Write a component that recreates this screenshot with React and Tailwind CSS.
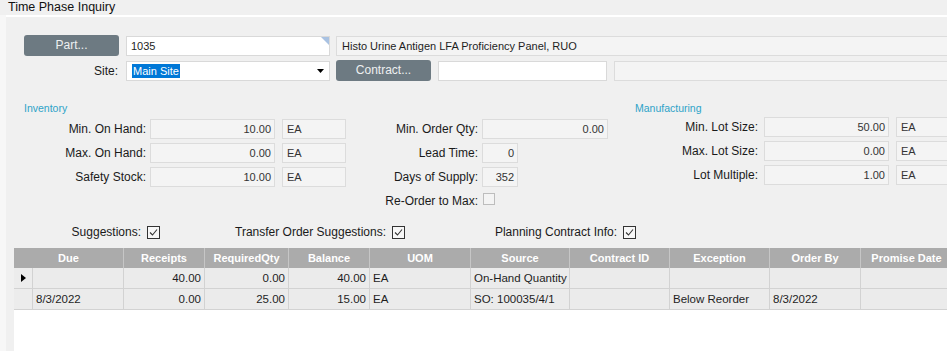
import React from 'react'

// Time Phase Inquiry screen

const labelCls = 'text-right text-[12px] leading-[20px] text-[#1a1a1a] whitespace-nowrap'
const fieldCls = 'h-[20px] bg-[#f4f4f4] border border-[#dcdcdc] text-[11px] leading-[18px] text-[#333] px-[4px] whitespace-nowrap overflow-hidden'

function Field({ w, value, right }) {
  return (
    <div className={`${fieldCls} ${w} ${right ? 'text-right pr-[3px]' : ''}`}>{value}</div>
  )
}

function Row({ labelW, label, gap, field, uom }) {
  return (
    <div className="flex items-center h-[20px]">
      <div className={`${labelW} ${labelCls}`}>{label}</div>
      <div className={gap} />
      {field}
      {uom && <div className="w-[7px]" />}
      {uom && <Field w="w-[64px] shrink-0" value={uom} />}
    </div>
  )
}

function CheckBox({ checked }) {
  return (
    <div className="w-[13px] h-[13px] border border-[#333] bg-[#f7f7f7] shrink-0">
      {checked && (
        <svg width="11" height="11" viewBox="0 0 11 11">
          <polyline points="2,5.5 4.5,8 9,2.5" fill="none" stroke="#333" strokeWidth="1.1" />
        </svg>
      )}
    </div>
  )
}

function SlateButton({ children }) {
  return (
    <div className="w-[95px] h-[21px] rounded-[3px] bg-[#6d7a82] text-[#eef0f1] text-[12px] leading-[21px] text-center">
      {children}
    </div>
  )
}

const cols = [
  { key: 'due', w: 'w-[91px]', head: 'Due' },
  { key: 'rec', w: 'w-[81px]', head: 'Receipts', right: true },
  { key: 'req', w: 'w-[84px]', head: 'RequiredQty', right: true },
  { key: 'bal', w: 'w-[81px]', head: 'Balance', right: true },
  { key: 'uom', w: 'w-[101px]', head: 'UOM' },
  { key: 'src', w: 'w-[99px]', head: 'Source' },
  { key: 'con', w: 'w-[100px]', head: 'Contract ID' },
  { key: 'exc', w: 'w-[100px]', head: 'Exception' },
  { key: 'ord', w: 'w-[91px]', head: 'Order By' },
  { key: 'pro', w: 'w-[92px]', head: 'Promise Date' },
]

const rows = [
  { due: '', rec: '40.00', req: '0.00', bal: '40.00', uom: 'EA', src: 'On-Hand Quantity', con: '', exc: '', ord: '', pro: '', current: true },
  { due: '8/3/2022', rec: '0.00', req: '25.00', bal: '15.00', uom: 'EA', src: 'SO: 100035/4/1', con: '', exc: 'Below Reorder', ord: '8/3/2022', pro: '' },
]

export default function App() {
  return (
    <div className="w-[947px] h-[351px] overflow-hidden bg-[#f0f0f0] font-['Liberation_Sans',Arial,sans-serif] text-[#1a1a1a]">
      <div className="h-[15px] pl-[8px] text-[12.5px] leading-[14px] text-[#111]">Time Phase Inquiry</div>
      <div className="flex h-[336px]">
        <div className="w-[6px] shrink-0 bg-[#f7f7f7]" />
        <div className="flex-1 min-w-0 border-t-2 border-white flex flex-col">
          {/* part row */}
          <div className="flex items-center mt-[18px] pl-[18px] h-[21px]">
            <SlateButton>Part...</SlateButton>
            <div className="relative ml-[7px] w-[204px] h-[20px] bg-white border border-[#d9d9d9] text-[11px] leading-[18px] px-[4px] text-[#1e1e1e]">
              1035
              <div className="absolute top-0 right-0 w-0 h-0 border-t-[8px] border-l-[8px] border-t-[#a9c2e2] border-l-transparent" />
            </div>
            <div className="ml-[6px] flex-1 h-[20px] bg-[#f4f4f4] border border-[#dcdcdc] border-r-0 text-[11px] leading-[18px] px-[5px] text-[#1e1e1e] whitespace-nowrap">
              Histo Urine Antigen LFA Proficiency Panel, RUO
            </div>
          </div>
          {/* site row */}
          <div className="flex items-center mt-[4px] pl-[18px] h-[21px]">
            <div className="w-[95px] text-right pr-[1px] text-[12px]">Site:</div>
            <div className="relative ml-[7px] w-[204px] h-[20px] bg-white border border-[#d9d9d9] px-[5px] flex items-center">
              <span className="bg-[#0078d7] text-white text-[11px] leading-[14px] px-[1px]">Main Site</span>
              <svg className="absolute right-[5px] top-[7px]" width="7" height="4" viewBox="0 0 7 4">
                <polygon points="0,0 7,0 3.5,4" fill="#000" />
              </svg>
            </div>
            <div className="ml-[6px]">
              <SlateButton>Contract...</SlateButton>
            </div>
            <div className="ml-[7px] w-[169px] h-[20px] bg-white border border-[#d9d9d9]" />
            <div className="ml-[7px] flex-1 h-[20px] bg-[#f4f4f4] border border-[#dcdcdc] border-r-0" />
          </div>

          {/* settings section */}
          <div className="flex mt-[20px] h-[123px] pl-[18px]">
            <div className="flex flex-col w-[322px] shrink-0">
              <div className="h-[18px] text-[10.5px] leading-[14px] text-[#2ea3c8]">Inventory</div>
              <div className="flex flex-col gap-[4px]">
                <Row labelW="w-[122px]" label="Min. On Hand:" gap="w-[4px]" field={<Field w="w-[125px]" value="10.00" right />} uom="EA" />
                <Row labelW="w-[122px]" label="Max. On Hand:" gap="w-[4px]" field={<Field w="w-[125px]" value="0.00" right />} uom="EA" />
                <Row labelW="w-[122px]" label="Safety Stock:" gap="w-[4px]" field={<Field w="w-[125px]" value="10.00" right />} uom="EA" />
              </div>
            </div>
            <div className="flex flex-col w-[262px] shrink-0 pt-[18px] gap-[4px]">
              <Row labelW="w-[132px]" label="Min. Order Qty:" gap="w-[4px]" field={<Field w="w-[126px]" value="0.00" right />} />
              <Row labelW="w-[132px]" label="Lead Time:" gap="w-[4px]" field={<Field w="w-[36px]" value="0" right />} />
              <Row labelW="w-[132px]" label="Days of Supply:" gap="w-[4px]" field={<Field w="w-[36px]" value="352" right />} />
              <div className="flex items-start h-[20px]">
                <div className={`w-[132px] ${labelCls}`}>Re-Order to Max:</div>
                <div className="ml-[5px] mt-[2px] w-[12px] h-[12px] border border-[#bdbdbd] bg-[#f4f4f4]" />
              </div>
            </div>
            <div className="flex flex-col ml-[27px] w-[340px] shrink-0">
              <div className="h-[16px] text-[10.5px] leading-[14px] text-[#2ea3c8]">Manufacturing</div>
              <div className="flex flex-col gap-[4px]">
                <Row labelW="w-[123px]" label="Min. Lot Size:" gap="w-[6px]" field={<Field w="w-[125px]" value="50.00" right />} uom="EA" />
                <Row labelW="w-[123px]" label="Max. Lot Size:" gap="w-[6px]" field={<Field w="w-[125px]" value="0.00" right />} uom="EA" />
                <Row labelW="w-[123px]" label="Lot Multiple:" gap="w-[6px]" field={<Field w="w-[125px]" value="1.00" right />} uom="EA" />
              </div>
            </div>
          </div>

          {/* checkbox row */}
          <div className="flex items-center h-[16px] text-[12px]">
            <div className="w-[135px] text-right">Suggestions:</div>
            <div className="ml-[6px]"><CheckBox checked /></div>
            <div className="w-[226px] text-right">Transfer Order Suggestions:</div>
            <div className="ml-[6px]"><CheckBox checked /></div>
            <div className="w-[212px] text-right">Planning Contract Info:</div>
            <div className="ml-[6px]"><CheckBox checked /></div>
          </div>

          {/* grid */}
          <div className="mt-[8px] ml-[8px] flex-1 bg-white min-w-0">
            <div className="flex h-[20px] bg-[#ababab] text-white font-bold text-[11px] leading-[20px] whitespace-nowrap">
              {cols.map((c, i) => (
                <div
                  key={c.key}
                  className={`shrink-0 text-center ${i === 0 ? 'w-[109px]' : `${c.w} border-l border-[#c6c6c6]`}`}
                >
                  {c.head}
                </div>
              ))}
            </div>
            {rows.map((r, ri) => (
              <div key={ri} className="flex h-[21px] border-b border-[#d2d2d2] bg-[#ebebeb] text-[11.5px] leading-[20px] text-[#1e1e1e] whitespace-nowrap">
                <div className="w-[18px] shrink-0 bg-[#ececec] flex items-center justify-center">
                  {r.current && (
                    <svg width="5" height="8" viewBox="0 0 5 8">
                      <polygon points="0,0 5,4 0,8" fill="#000" />
                    </svg>
                  )}
                </div>
                {cols.map((c) => (
                  <div
                    key={c.key}
                    className={`${c.w} shrink-0 border-l border-[#d2d2d2] overflow-hidden ${c.right ? 'text-right pr-[3px]' : 'pl-[3px]'}`}
                  >
                    {r[c.key]}
                  </div>
                ))}
              </div>
            ))}
          </div>
        </div>
      </div>
    </div>
  )
}
